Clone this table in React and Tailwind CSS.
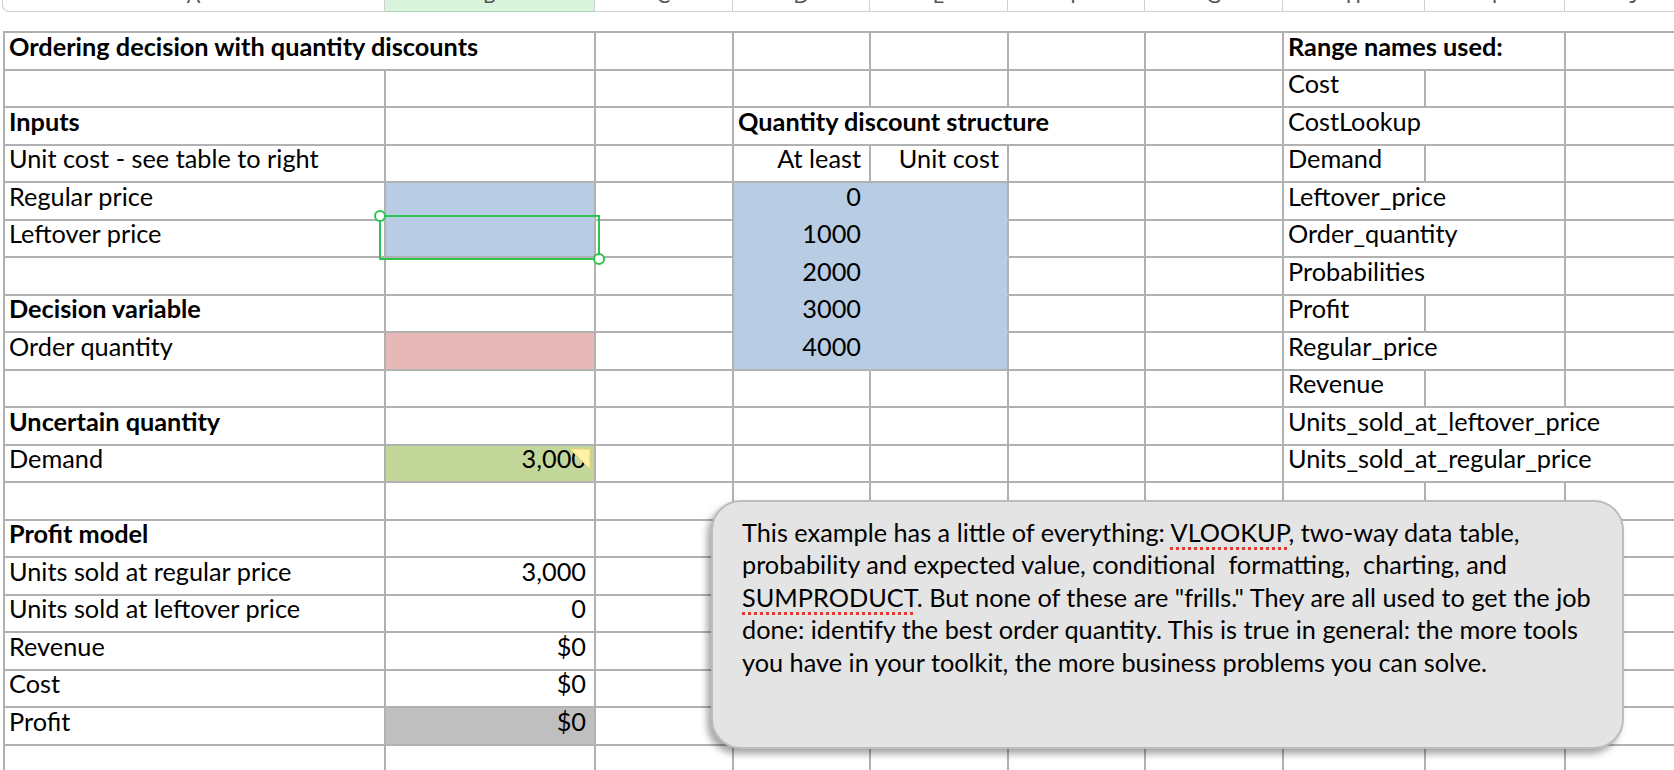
import React from "react";

const GRID_COLS =
  "grid-cols-[381px_210px_138px_137px_138px_137px_138px_142px_140px_138px]";

const SPAN = { 1: "", 2: "col-span-2", 3: "col-span-3" };
const FILL = {
  blue: "bg-[#b8cce4]",
  pink: "bg-[#e6b8b7]",
  green: "bg-[#c4d79b]",
  gray: "bg-[#bfbfbf]",
};
// fill hides the gridline inside a filled block
const MERGE_B = { blue: "border-b-[#b8cce4]" };
const MERGE_R = { blue: "border-r-[#b8cce4]" };

const blanks = (n) => Array.from({ length: n }, () => ({}));

const rows = [
  [
    { t: "Ordering decision with quantity discounts", b: 1, s: 2 },
    ...blanks(5),
    { t: "Range names used:", b: 1, s: 2 },
    {},
  ],
  [...blanks(7), { t: "Cost" }, {}, {}],
  [
    { t: "Inputs", b: 1 },
    {},
    {},
    { t: "Quantity discount structure", b: 1, s: 3 },
    {},
    { t: "CostLookup", s: 2 },
    {},
  ],
  [
    { t: "Unit cost - see table to right" },
    {},
    {},
    { t: "At least", r: 1 },
    { t: "Unit cost", r: 1 },
    {},
    {},
    { t: "Demand" },
    {},
    {},
  ],
  [
    { t: "Regular price" },
    { bg: "blue", mb: 1 },
    {},
    { t: "0", r: 1, bg: "blue", mb: 1, mr: 1 },
    { bg: "blue", mb: 1 },
    {},
    {},
    { t: "Leftover_price", s: 2 },
    {},
  ],
  [
    { t: "Leftover price" },
    { bg: "blue" },
    {},
    { t: "1000", r: 1, bg: "blue", mb: 1, mr: 1 },
    { bg: "blue", mb: 1 },
    {},
    {},
    { t: "Order_quantity", s: 2 },
    {},
  ],
  [
    {},
    {},
    {},
    { t: "2000", r: 1, bg: "blue", mb: 1, mr: 1 },
    { bg: "blue", mb: 1 },
    {},
    {},
    { t: "Probabilities", s: 2 },
    {},
  ],
  [
    { t: "Decision variable", b: 1 },
    {},
    {},
    { t: "3000", r: 1, bg: "blue", mb: 1, mr: 1 },
    { bg: "blue", mb: 1 },
    {},
    {},
    { t: "Profit" },
    {},
    {},
  ],
  [
    { t: "Order quantity" },
    { bg: "pink" },
    {},
    { t: "4000", r: 1, bg: "blue", mr: 1 },
    { bg: "blue" },
    {},
    {},
    { t: "Regular_price", s: 2 },
    {},
  ],
  [...blanks(7), { t: "Revenue" }, {}, {}],
  [
    { t: "Uncertain quantity", b: 1 },
    ...blanks(6),
    { t: "Units_sold_at_leftover_price", s: 3 },
  ],
  [
    { t: "Demand" },
    { t: "3,000", r: 1, bg: "green", note: 1 },
    ...blanks(5),
    { t: "Units_sold_at_regular_price", s: 3 },
  ],
  blanks(10),
  [{ t: "Profit model", b: 1 }, ...blanks(9)],
  [{ t: "Units sold at regular price" }, { t: "3,000", r: 1 }, ...blanks(8)],
  [{ t: "Units sold at leftover price" }, { t: "0", r: 1 }, ...blanks(8)],
  [{ t: "Revenue" }, { t: "$0", r: 1 }, ...blanks(8)],
  [{ t: "Cost" }, { t: "$0", r: 1 }, ...blanks(8)],
  [{ t: "Profit" }, { t: "$0", r: 1, bg: "gray" }, ...blanks(8)],
  blanks(10),
];

const headers = [
  { l: "A", w: "w-[383px]", first: true },
  { l: "B", w: "w-[210px]", sel: true },
  { l: "C", w: "w-[138px]" },
  { l: "D", w: "w-[137px]" },
  { l: "E", w: "w-[138px]" },
  { l: "F", w: "w-[137px]" },
  { l: "G", w: "w-[138px]" },
  { l: "H", w: "w-[142px]" },
  { l: "I", w: "w-[140px]" },
  { l: "J", w: "w-[138px]" },
];

function Cell({ c }) {
  return (
    <div
      className={[
        "relative flex items-end whitespace-nowrap border-r-2 border-b-2 border-[#b1b1b1] pb-[8px] leading-[30px]",
        SPAN[c.s || 1],
        c.r ? "justify-end pr-[8px]" : "pl-[4px]",
        c.b ? "font-bold" : "",
        c.bg ? FILL[c.bg] : "",
        c.mb ? MERGE_B[c.bg] : "",
        c.mr ? MERGE_R[c.bg] : "",
      ].join(" ")}
    >
      {c.t}
      {c.note && (
        <svg
          className="absolute top-[2px] right-[3px]"
          width="22"
          height="22"
          viewBox="0 0 22 22"
        >
          <polygon
            points="1,1 21,1 21,21"
            fill="#fff2a6"
            stroke="#e3d27a"
            strokeWidth="1"
          />
        </svg>
      )}
    </div>
  );
}

function Squiggle({ children }) {
  return (
    <span className="underline decoration-dotted decoration-[#e5392f] decoration-[3px] underline-offset-[5px]">
      {children}
    </span>
  );
}

export default function App() {
  return (
    <div className="relative w-[1674px] h-[770px] overflow-hidden bg-white text-black text-[25.3px] font-['Lato',sans-serif]">
      {/* column headers, scrolled mostly out of view */}
      <div className="flex h-[12px] ml-[2px] w-max">
        {headers.map((h) => (
          <div
            key={h.l}
            className={[
              "flex justify-center overflow-hidden border-r border-b border-[#cfcfcf] text-[20px] leading-[20px] text-[#555]",
              h.w,
              h.first ? "border-l rounded-bl-[7px]" : "",
              h.sel ? "bg-[#d9f3dc] border-b-[#a9d9b1]" : "",
            ].join(" ")}
          >
            <span className="-mt-[15px]">{h.l}</span>
          </div>
        ))}
      </div>

      {/* sheet grid */}
      <div
        className={`grid ${GRID_COLS} auto-rows-[37.5px] w-max ml-[3px] mt-[19px] border-t-2 border-l-2 border-[#b1b1b1]`}
      >
        {rows.map((row, i) =>
          row.map((c, j) => <Cell key={`${i}-${j}`} c={c} />)
        )}
      </div>

      {/* selection on Leftover price input */}
      <div className="absolute left-[379px] top-[215px] w-[221px] h-[45px] border-2 border-[#2cc44f]">
        <div className="absolute -left-[7px] -top-[7px] w-[12px] h-[12px] rounded-full bg-white border-2 border-[#2cc44f]" />
        <div className="absolute -right-[7px] -bottom-[7px] w-[12px] h-[12px] rounded-full bg-white border-2 border-[#2cc44f]" />
      </div>

      {/* text box */}
      <div className="absolute left-[711px] top-[500px] w-[913px] h-[249px] rounded-[30px] bg-[#e4e4e4] border-2 border-[#bcbcbc] shadow-[-4px_5px_7px_rgba(0,0,0,0.35)] pl-[29px] pt-[14px] leading-[32.4px] whitespace-pre">
        <div>
          This example has a little of everything: <Squiggle>VLOOKUP</Squiggle>, two-way data table,
        </div>
        <div>probability and expected value, conditional  formatting,  charting, and</div>
        <div>
          <Squiggle>SUMPRODUCT</Squiggle>. But none of these are "frills." They are all used to get the job
        </div>
        <div>done: identify the best order quantity. This is true in general: the more tools</div>
        <div>you have in your toolkit, the more business problems you can solve.</div>
      </div>
    </div>
  );
}
